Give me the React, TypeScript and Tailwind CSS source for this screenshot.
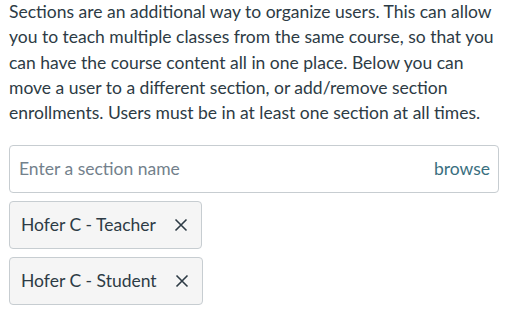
import React from "react";

function XIcon() {
  return (
    <svg width="14" height="14" viewBox="0 0 14 14" className="text-[#2d3b45]">
      <path d="M1.5 1.5 L12.5 12.5 M12.5 1.5 L1.5 12.5" stroke="currentColor" strokeWidth="1.6" fill="none" />
    </svg>
  );
}

function Chip({ label }: { label: string }) {
  return (
    <div className="inline-flex items-center self-start h-[48px] pl-[11px] pr-[13px] bg-[#f5f5f5] border border-[#c7cdd1] rounded-[4px] text-[#2d3b45] text-[17.5px]">
      <span>{label}</span>
      <span className="ml-[18px] flex items-center"><XIcon /></span>
    </div>
  );
}

export default function App() {
  return (
    <div className="w-[505px] h-[313px] bg-white pl-[9px] pr-[7px]" style={{ fontFamily: "Lato, 'Noto Sans', sans-serif" }}>
      <p className="text-[17.5px] leading-[25.3px] text-[#2d3b45] -mt-[1px]">
        Sections are an additional way to organize users. This can allow you to teach multiple classes from the same course, so that you can have the course content all in one place. Below you can move a user to a different section, or add/remove section enrollments. Users must be in at least one section at all times.
      </p>
      <div className="mt-[19.5px] flex items-center justify-between h-[48px] w-[490px] border border-[#c7cdd1] rounded-[4px] pl-[9px] pr-[8px] text-[17.5px]">
        <span className="text-[#73818c]">Enter a section name</span>
        <span className="text-[#3a6f80]">browse</span>
      </div>
      <div className="mt-[8px] flex flex-col gap-[8px]">
        <Chip label="Hofer C - Teacher" />
        <Chip label="Hofer C - Student" />
      </div>
    </div>
  );
}
